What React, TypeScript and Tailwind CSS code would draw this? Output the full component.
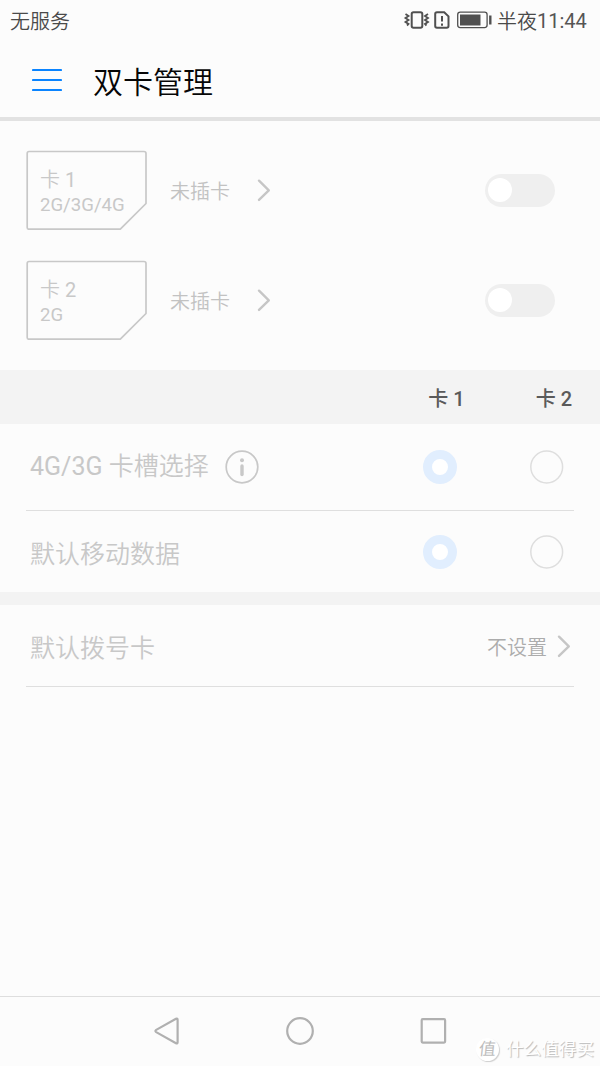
import React from "react";

function Chevron() {
  return (
    <svg width="14" height="24" viewBox="0 0 14 24" fill="none" stroke="#c6c6c6" strokeWidth="2.4" strokeLinecap="round" strokeLinejoin="round">
      <path d="M2 2.7 11.8 12.3 2 21.9" />
    </svg>
  );
}

function Toggle() {
  return (
    <div className="flex h-[33px] w-[70px] items-center rounded-full bg-[#efefef] pl-[3px]">
      <div className="size-6 rounded-full bg-white" />
    </div>
  );
}

function SimRow({ slot, network }: { slot: number; network: string }) {
  return (
    <div className="flex h-20 items-center">
      <div className="grid h-20 w-[121px] shrink-0">
        <svg className="col-start-1 row-start-1" width="121" height="80" viewBox="0 0 121 80" fill="none" stroke="#c8c8c8" strokeWidth="1.7" strokeLinejoin="round">
          <path d="M3 1.5H118Q120 1.5 120 3.5V53.5L94.3 79.2H3Q1.2 79.2 1.2 77.4V3.5Q1.2 1.5 3 1.5Z" />
        </svg>
        <div className="col-start-1 row-start-1 flex flex-col pt-[17px] pl-3.5 text-[#c8c8c8]">
          <span className="text-[20px] leading-[26px]"><span className="font-[350]">卡</span> {slot}</span>
          <span className="text-[18.6px] leading-[25px]">{network}</span>
        </div>
      </div>
      <span className="ml-[23px] w-[86.5px] pt-[3px] text-[20px] leading-6 font-[350] text-[#c2c2c2]">未插卡</span>
      <Chevron />
      <div className="ml-auto">
        <Toggle />
      </div>
    </div>
  );
}

function Radio({ checked }: { checked?: boolean }) {
  return checked ? (
    <div className="size-[34px] rounded-full border-[9px] border-[#e1eefe] bg-white" />
  ) : (
    <svg width="34" height="34" viewBox="0 0 34 34" fill="none" stroke="#dedede" strokeWidth="1.5">
      <circle cx="16.7" cy="17" r="15.9" />
    </svg>
  );
}

function Radios() {
  return (
    <div className="ml-auto flex gap-[73px] pr-2.5">
      <Radio checked />
      <Radio />
    </div>
  );
}

export default function App() {
  return (
    <div className="flex h-[1066px] w-[600px] flex-col overflow-hidden bg-[#fcfcfc] font-[Roboto,'Noto_Sans_CJK_SC',sans-serif]">
      <div className="flex h-10 shrink-0 items-center pr-3.5 pl-2.5 text-[20px] leading-6 text-[#555]">
        <span className="pt-[3px] font-[350] text-[#4a4a4a]">无服务</span>
        <svg className="ml-auto" width="90" height="24" viewBox="0 0 90 24" fill="none" stroke="#505050">
          <rect x="8.7" y="4.2" width="10.6" height="15.6" rx="1.8" strokeWidth="2" />
          <path d="m2.5 6 3 2-3 2 3 2-3 2 3 2-1.5 1.5M25 6l-3 2 3 2-3 2 3 2-3 2 1.5 1.5" strokeWidth="1.8" />
          <path d="M34 4.2h7.2l4.3 4.2v9.6q0 1.8-1.8 1.8H34q-1.8 0-1.8-1.8V6q0-1.8 1.8-1.8Z" strokeWidth="2" />
          <path d="M39 8v5.5m0 2v2.2" strokeWidth="2" />
          <rect x="54.7" y="4.2" width="29.4" height="15.4" rx="2.5" strokeWidth="1.3" />
          <rect x="57" y="6.5" width="20.5" height="11" fill="#505050" stroke="none" />
          <path d="M87.3 7.5v9" strokeWidth="2.4" />
        </svg>
        <span className="ml-1 pt-[3px] font-[350] text-[#4a4a4a]">半夜</span>
        <span className="w-[49px] pt-px text-[20px]">11:44</span>
      </div>

      <header className="flex h-[77px] shrink-0 items-center pl-8">
        <svg width="30" height="24" viewBox="0 0 30 24" stroke="#0a84ff" strokeWidth="2.2" strokeLinecap="round">
          <path d="M1 3h28M1 13h28M1 23h28" />
        </svg>
        <h1 className="ml-[31px] pt-[9px] text-[30px] leading-10 font-[350] text-[#060606]">双卡管理</h1>
      </header>
      <div className="h-1 shrink-0 bg-[#e2e2e2]" />

      <section className="flex h-[249px] shrink-0 flex-col gap-[30px] pt-[29px] pr-[45px] pl-[26px]">
        <SimRow slot={1} network="2G/3G/4G" />
        <SimRow slot={2} network="2G" />
      </section>

      <div className="flex h-[54px] shrink-0 items-center justify-end gap-[71px] bg-[#f3f3f3] pt-[3px] pr-7 text-[20px] leading-6 font-medium text-[#5a5a5a]">
        <span>卡 1</span>
        <span>卡 2</span>
      </div>

      <div className="mx-[26px] flex h-[87px] shrink-0 items-center border-b border-[#dfdfdf] pl-1">
        <span className="text-[25px] leading-8 text-[#c8c8c8]">4G/3G <span className="font-[350]">卡槽选择</span></span>
        <svg className="ml-4" width="34" height="34" viewBox="0 0 34 34">
          <circle cx="17" cy="17" r="15.8" fill="none" stroke="#c8c8c8" strokeWidth="1.7" />
          <circle cx="17" cy="10.2" r="2" fill="#c8c8c8" />
          <path d="M17 16v8.5" stroke="#c8c8c8" strokeWidth="3.4" strokeLinecap="round" />
        </svg>
        <Radios />
      </div>
      <div className="mx-[26px] flex h-[81px] shrink-0 items-center pl-1">
        <span className="pt-[6px] text-[25px] leading-8 font-[350] text-[#c8c8c8]">默认移动数据</span>
        <Radios />
      </div>
      <div className="h-[13px] shrink-0 bg-[#f3f3f3]" />
      <div className="mx-[26px] flex h-[82px] shrink-0 items-center border-b border-[#dfdfdf] pr-[3px] pl-1">
        <span className="pt-[6px] text-[25px] leading-8 font-[350] text-[#c8c8c8]">默认拨号卡</span>
        <span className="mr-2.5 ml-auto pt-[4px] text-[20px] leading-6 font-[350] text-[#acacac]">不设置</span>
        <Chevron />
      </div>

      <nav className="mt-auto flex h-[70px] shrink-0 items-center border-t border-[#dedede] pl-[152px]">
        <svg className="mb-0.5" width="298" height="32" viewBox="0 0 298 32" fill="none" stroke="#b0b0b0" strokeWidth="2.2" strokeLinejoin="round">
          <path d="M4.2 14.9Q2.6 16 4.2 17.1L24 28.2Q25.6 29 25.6 27.2V4.8Q25.6 3 24 3.8Z" />
          <circle cx="148" cy="16" r="12.8" />
          <rect x="269.7" y="4.2" width="23.4" height="23.4" rx="1" />
        </svg>
        <div className="mt-[35px] ml-[26px] flex items-center gap-[7px] text-[17.6px] leading-6 whitespace-nowrap text-white [text-shadow:1px_1px_1px_#b8b8b8]">
          <div className="flex size-[23px] shrink-0 items-center justify-center rounded-full bg-white text-[17px] text-[#bdbdbd] shadow-[1px_1px_1px_#cfcfcf] [text-shadow:none]">
            <span className="-skew-x-6">值</span>
          </div>
          <span>什么值得买</span>
        </div>
      </nav>
    </div>
  );
}
